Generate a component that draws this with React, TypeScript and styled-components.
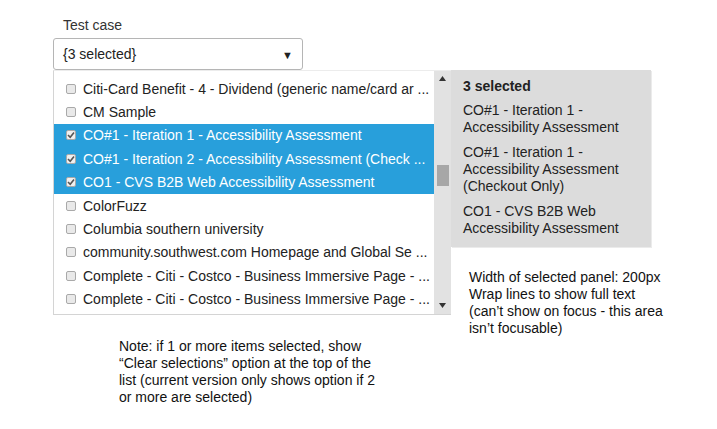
import React from "react";
import styled, { createGlobalStyle } from "styled-components";

const Global = createGlobalStyle`
  html, body { margin: 0; padding: 0; background: #fff; }
  body { font-family: "Liberation Sans", Arial, sans-serif; color: #222; }
`;

const Page = styled.div`
  width: 717px;
  height: 429px;
  box-sizing: border-box;
  padding: 17px 0 0 53px;
  font-size: 14px;
`;

const Label = styled.div`
  padding-left: 10px;
  line-height: 17px;
  color: #333;
  margin-bottom: 4px;
`;

const SelectBox = styled.div`
  width: 250px;
  height: 32px;
  box-sizing: border-box;
  border: 1px solid #b5b5b5;
  border-radius: 3px;
  display: flex;
  align-items: center;
  justify-content: space-between;
  padding: 0 9px 0 9px;
  color: #222;
`;

const Arrow = styled.span`
  font-size: 11px;
  color: #222;
  padding-top: 1px;
`;

const Row = styled.div`
  display: flex;
  align-items: flex-start;
`;

const Dropdown = styled.div`
  width: 398px;
  height: 245px;
  box-sizing: border-box;
  display: flex;
  border-left: 1px solid #d4d4d4;
  border-bottom: 1px solid #d4d4d4;
  border-top: 1px solid #ececec;
`;

const List = styled.ul`
  list-style: none;
  margin: 0;
  padding: 6px 0 0 0;
  flex: 1;
  min-width: 0;
`;

const Item = styled.li<{ $selected?: boolean }>`
  height: 23.4px;
  display: flex;
  align-items: center;
  padding-left: 12px;
  gap: 7px;
  white-space: nowrap;
  overflow: hidden;
  background: ${(p) => (p.$selected ? "#289fdb" : "transparent")};
  color: ${(p) => (p.$selected ? "#fff" : "#222")};
`;

const Box = styled.span<{ $checked?: boolean }>`
  width: 10px;
  height: 10px;
  box-sizing: border-box;
  flex: none;
  border: 1px solid #a9a9a9;
  border-radius: 2px;
  background: ${(p) => (p.$checked ? "#f0f0f0" : "#e9e9e9")};
  display: flex;
  align-items: center;
  justify-content: center;
`;

const Scrollbar = styled.div`
  width: 17px;
  flex: none;
  background: #e2e2e2;
  display: flex;
  flex-direction: column;
  align-items: center;
  padding: 5px 0 6px;
  box-sizing: border-box;
`;

const Thumb = styled.div`
  width: 12px;
  height: 21px;
  background: #a7a7a7;
  margin-top: 84px;
`;

const Spacer = styled.div`
  flex: 1;
`;

const Side = styled.div`
  display: flex;
  flex-direction: column;
`;

const Panel = styled.div`
  width: 200px;
  box-sizing: border-box;
  background: #dcdcdc;
  padding: 8px 12px 10px 12px;
  box-shadow: 1px 1px 0 #ebebeb;
  line-height: 17px;
  color: #222;
`;

const PanelTitle = styled.div`
  font-weight: bold;
  margin-bottom: 7px;
`;

const PanelItem = styled.div`
  margin-bottom: 8px;
  &:last-child { margin-bottom: 0; }
`;

const Note = styled.div<{ $w: number }>`
  width: ${(p) => p.$w}px;
  line-height: 17px;
  color: #111;
`;

const SideNote = styled(Note)`
  margin: 22px 0 0 18px;
`;

const BottomNote = styled(Note)`
  margin: 1px 0 0 66px;
`;

const Tri = ({ up }: { up?: boolean }) => (
  <svg width="7" height="5" viewBox="0 0 7 5">
    <path d={up ? "M0 5 L3.5 0 L7 5 Z" : "M0 0 L7 0 L3.5 5 Z"} fill="#333" />
  </svg>
);

const Check = () => (
  <svg width="8" height="8" viewBox="0 0 8 8">
    <path d="M1 4 L3.2 6.2 L7 1.5" stroke="#555" strokeWidth="1.6" fill="none" />
  </svg>
);

const items: { text: string; sel?: boolean }[] = [
  { text: "Citi-Card Benefit - 4 - Dividend (generic name/card ar ..." },
  { text: "CM Sample" },
  { text: "CO#1 - Iteration 1 - Accessibility Assessment", sel: true },
  { text: "CO#1 - Iteration 2 - Accessibility Assessment (Check ...", sel: true },
  { text: "CO1 - CVS B2B Web Accessibility Assessment", sel: true },
  { text: "ColorFuzz" },
  { text: "Columbia southern university" },
  { text: "community.southwest.com Homepage and Global Se ..." },
  { text: "Complete - Citi - Costco - Business Immersive Page - ..." },
  { text: "Complete - Citi - Costco - Business Immersive Page - ..." },
];

export default function App() {
  return (
    <Page>
      <Global />
      <Label>Test case</Label>
      <SelectBox>
        <span>{"{3 selected}"}</span>
        <Arrow>▼</Arrow>
      </SelectBox>
      <Row>
        <Dropdown>
          <List>
            {items.map((it, i) => (
              <Item key={i} $selected={it.sel}>
                <Box $checked={it.sel}>{it.sel && <Check />}</Box>
                <span>{it.text}</span>
              </Item>
            ))}
          </List>
          <Scrollbar>
            <Tri up />
            <Thumb />
            <Spacer />
            <Tri />
          </Scrollbar>
        </Dropdown>
        <Side>
          <Panel>
            <PanelTitle>3 selected</PanelTitle>
            <PanelItem>CO#1 - Iteration 1 - Accessibility Assessment</PanelItem>
            <PanelItem>CO#1 - Iteration 1 - Accessibility Assessment (Checkout Only)</PanelItem>
            <PanelItem>CO1 - CVS B2B Web Accessibility Assessment</PanelItem>
          </Panel>
          <SideNote $w={200}>
            Width of selected panel: 200px
            <br />
            Wrap lines to show full text (can’t show on focus - this area isn’t focusable)
          </SideNote>
        </Side>
      </Row>
      <BottomNote $w={270}>
        Note: if 1 or more items selected, show “Clear selections” option at the top of the list (current version only shows option if 2 or more are selected)
      </BottomNote>
    </Page>
  );
}
